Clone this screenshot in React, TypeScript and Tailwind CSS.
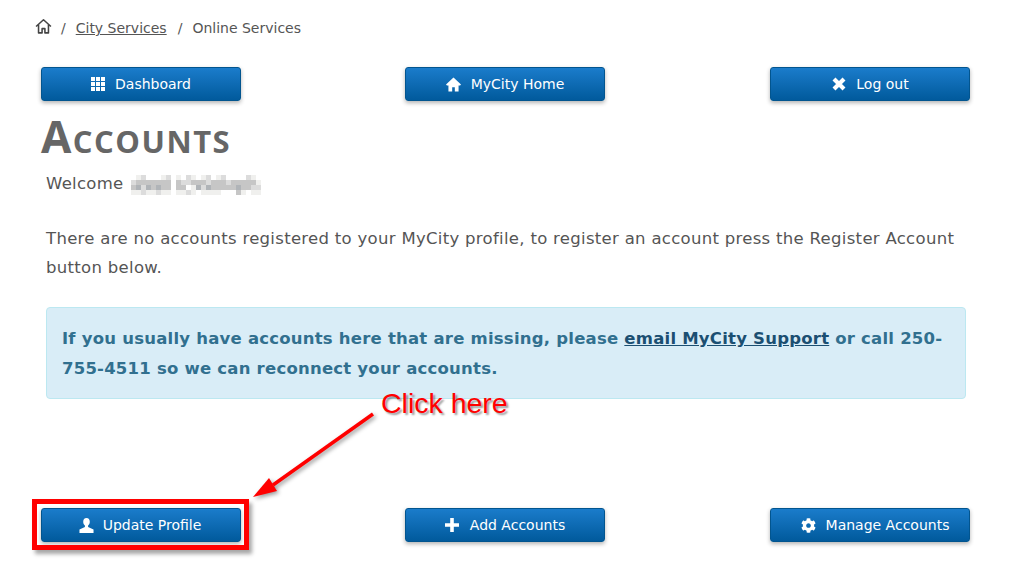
import type { ReactNode } from "react";
import { FaCog } from "react-icons/fa";

const SHADES: Record<string, string> = {
  "0": "#ffffff",
  "1": "#f0f0ee",
  "2": "#dcdcdc",
  "3": "#c6c6c6",
  "4": "#b0b4b8",
};

// pixelated name, as in the screenshot
const NAME_ROWS = [
  "01200012 10210120120000210",
  "23333333 32233323332333331",
  "34243433 33014243333343322",
  "11211211 11210111100031011",
];

function Mosaic() {
  return (
    <span className="ml-[7px] flex flex-col">
      {NAME_ROWS.map((row, y) => (
        <span key={y} className="flex">
          {row.split("").map((c, x) => (
            <span key={x} className="h-[5px] w-[5px]" style={{ background: SHADES[c] ?? "#ffffff" }} />
          ))}
        </span>
      ))}
    </span>
  );
}

function Btn({ icon, label, extra = "gap-[10px]" }: { icon: ReactNode; label: string; extra?: string }) {
  return (
    <button className={`flex h-[34px] w-[200px] items-center justify-center rounded-[3px] border border-[#02558f] bg-gradient-to-b from-[#1a7ccb] to-[#015a9c] text-[14px] text-white shadow-[0_2px_4px_rgba(0,0,0,0.3)] ${extra}`}>
      <span className="flex w-[15px] justify-center">{icon}</span>
      <span className="pt-[1px]">{label}</span>
    </button>
  );
}

const GridIcon = (
  <svg width="14" height="14" viewBox="0 0 14 14" fill="#fff">
    {[0, 5, 10].map(y => [0, 5, 10].map(x => <rect key={`${x}-${y}`} x={x} y={y} width="4" height="4" />))}
  </svg>
);

const HomeIcon = (
  <svg width="16" height="15" viewBox="0 0 16 15" fill="#fff">
    <path d="M8 0 0 7.5l1 1h1.6V15h4v-4.5h2.8V15h4V8.5H15l1-1z" />
  </svg>
);

const CloseIcon = (
  <svg width="14" height="14" viewBox="0 0 14 14" stroke="#fff" strokeWidth="4.2">
    <path d="M2 2l10 10M12 2 2 12" />
  </svg>
);

const UserIcon = (
  <svg width="15" height="15" viewBox="0 0 16 16" fill="#fff">
    <path d="M8 0C5.7 0 4.5 1.8 4.5 4.1c0 1.7.7 3.2 1.8 4v1.6L.5 12.3V16h15v-3.7l-5.800-2.600V8.100c1.100-.8 1.800-2.300 1.800-4C11.500 1.800 10.300 0 8 0z" />
  </svg>
);

const PlusIcon = (
  <svg width="14" height="14" viewBox="0 0 14 14" stroke="#fff" strokeWidth="3.6">
    <path d="M7 0v14M0 7h14" />
  </svg>
);

export default function App() {
  return (
    <div className="relative h-[571px] w-[1016px] overflow-hidden bg-white font-['DejaVu_Sans','Liberation_Sans',sans-serif] text-[#555]">
      {/* Breadcrumb */}
      <nav className="flex h-[57px] items-center pl-[35px] text-[14px] text-[#555]">
        <svg width="17" height="17" viewBox="0 0 24 24" fill="none" stroke="#444" strokeWidth="2.2" className="mb-[4px]">
          <path d="M1.500 12 12 2.500 22.500 12M5 9.500V21h5v-6h4v6h5V9.500" strokeLinejoin="round" />
        </svg>
        <span className="ml-[9px]">/</span>
        <a className="ml-[10px] underline">City Services</a>
        <span className="ml-[11px]">/</span>
        <span className="ml-[10px]">Online Services</span>
      </nav>

      <div className="mt-[10px] flex w-[970px] gap-[164px] pl-[41px]">
        <Btn icon={GridIcon} label="Dashboard" extra="gap-[10px] pr-[1px]" />
        <Btn icon={HomeIcon} label="MyCity Home" />
        <div className="ml-auto">
          <Btn icon={CloseIcon} label="Log out" />
        </div>
      </div>

      <h1 className="ml-[41px] mt-[6px] h-[62px] font-['Open_Sans',sans-serif] text-[44px] font-bold leading-[58px] tracking-[1.500px] text-[#666] [font-variant:small-caps]">
        Accounts
      </h1>

      <div className="ml-[46px] w-[920px] text-[16.500px] tracking-[0.3px]">
        <p className="flex h-[29px] items-center pt-[2px]">
          Welcome
          <Mosaic />
        </p>
        <p className="mt-[26px] leading-[29px] text-[#555]">
          There are no accounts registered to your MyCity profile, to register an account press the Register Account button below.
        </p>
        <div className="mt-[25px] h-[92px] rounded-[4px] border border-[#bce8f1] bg-[#d9edf7] px-[15px] pt-[16px] text-[16.500px] font-bold leading-[30px] tracking-[0.22px] text-[#31708f]">
          If you usually have accounts here that are missing, please <a className="text-[#1b4f72] underline">email MyCity Support</a> or call 250-755-4511 so we can reconnect your accounts.
        </div>
      </div>

      <div className="mt-[109px] flex w-[970px] gap-[164px] pl-[41px]">
        <Btn icon={UserIcon} label="Update Profile" extra="gap-[9px] pr-[2px]" />
        <Btn icon={PlusIcon} label="Add Accounts" />
        <div className="ml-auto">
          <Btn icon={<FaCog className="text-[15px]" />} label="Manage Accounts" extra="gap-[10px] pl-[10px]" />
        </div>
      </div>

      {/* Annotation overlay */}
      <div className="absolute left-[32px] top-[499px] h-[51px] w-[217px] border-[5px] border-[#ff0000] shadow-[3px_4px_4px_rgba(0,0,0,0.35)]" />
      <span className="absolute left-[381px] top-[384px] font-['Liberation_Sans',sans-serif] text-[28.500px] leading-[38px] text-[#ff0000] [text-shadow:2px_2px_2px_rgba(0,0,0,0.4)]">
        Click here
      </span>
      <svg className="absolute left-[240px] top-[405px]" width="145" height="100" viewBox="0 0 145 100">
        <g className="[filter:drop-shadow(2px_2px_2px_rgba(0,0,0,0.4))]">
          <path d="M133 9 33 80" stroke="#ff0000" strokeWidth="3.500" />
          <path d="M13 92 29 73 37 86Z" fill="#ff0000" />
        </g>
      </svg>
    </div>
  );
}
